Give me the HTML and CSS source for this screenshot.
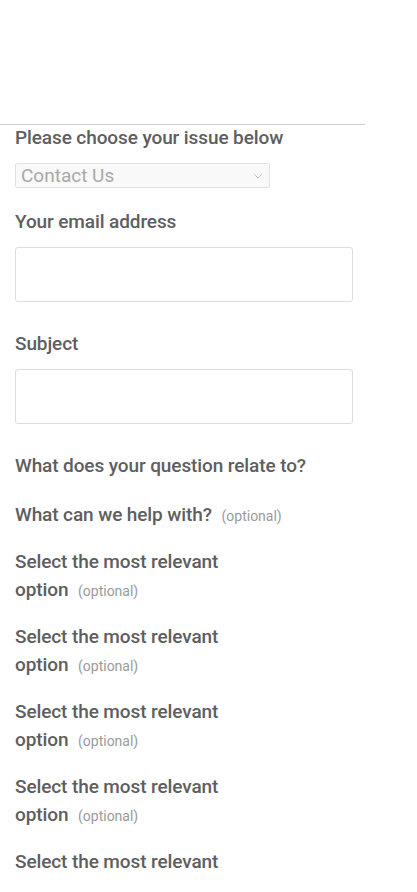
FILE: index.html
```html
<!DOCTYPE html>
<html>
<head>
<meta charset="utf-8">
<link rel="stylesheet" href="styles.css">
</head>
<body>
<div class="page">
  <div class="rule"></div>
  <form class="form">
    <div class="field field-issue">
      <div class="label label-issue">Please choose your issue below</div>
      <div class="select">
        <span class="select-text">Contact Us</span>
        <svg class="chev" width="10" height="6" viewBox="0 0 10 6"><path d="M1 1l4 4 4-4" fill="none" stroke="#c4c4c4" stroke-width="0.9"/></svg>
      </div>
    </div>
    <div class="field">
      <div class="label">Your email address</div>
      <div class="input"></div>
    </div>
    <div class="field">
      <div class="label">Subject</div>
      <div class="input"></div>
    </div>
    <div class="plain first">What does your question relate to?</div>
    <div class="plain">What can we help with? <span class="opt">(optional)</span></div>
    <div class="plain narrow">Select the most relevant option <span class="opt">(optional)</span></div>
    <div class="plain narrow">Select the most relevant option <span class="opt">(optional)</span></div>
    <div class="plain narrow">Select the most relevant option <span class="opt">(optional)</span></div>
    <div class="plain narrow">Select the most relevant option <span class="opt">(optional)</span></div>
    <div class="plain narrow">Select the most relevant option <span class="opt">(optional)</span></div>
  </form>
</div>
</body>
</html>
```
FILE: styles.css
```css
html, body {
  margin: 0;
  padding: 0;
  background: #fff;
}
body {
  font-family: Roboto, "Liberation Sans", sans-serif;
  color: #5e5e5e;
  overflow: hidden;
}
.page {
  padding-top: 124px;
  height: 880px;
  box-sizing: border-box;
  overflow: hidden;
}
.rule {
  width: 365px;
  height: 1px;
  background: #cfcfcf;
}
.form {
  padding-left: 15px;
  width: 338px;
  display: flex;
  flex-direction: column;
}
.label, .plain {
  font-size: 19px;
  font-weight: 500;
  line-height: 28px;
  letter-spacing: -0.1px;
}
.label-issue {
  line-height: 25px;
}
.select {
  margin-top: 13px;
  width: 255px;
  height: 25px;
  box-sizing: border-box;
  border: 1px solid #e2e2e2;
  border-radius: 2px;
  background: #f9f9f9;
  display: flex;
  align-items: center;
  justify-content: space-between;
  padding: 0 5px 0 5px;
}
.select-text {
  font-size: 19px;
  color: #a8a8a8;
  font-weight: 400;
  line-height: 23px;
}
.chev {
  margin-right: 1px;
}
.field-issue {
  margin-bottom: 20px;
}
.input {
  margin-top: 11px;
  height: 55px;
  box-sizing: border-box;
  border: 1px solid #dcdcdc;
  border-radius: 3px;
  background: #fff;
  margin-bottom: 28px;
}
.plain {
  margin-bottom: 18px;
}
.plain.first {
  margin-bottom: 21px;
}
.narrow {
  max-width: 220px;
}
.opt {
  font-size: 14px;
  font-weight: 400;
  color: #9a9a9a;
  margin-left: 5px;
  letter-spacing: 0;
}
```
